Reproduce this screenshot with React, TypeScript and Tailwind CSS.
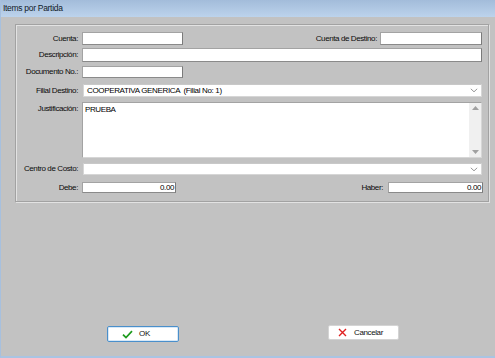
import React from "react";

const font = { fontFamily: '"Liberation Sans", Arial, sans-serif' };

function Box({ w, h, right, text }: { w: string; h: string; right?: boolean; text?: string }) {
  return (
    <div
      className={`${w} ${h} bg-white border border-t-[#a3a3a3] border-l-[#a3a3a3] border-r-[#7a7a7a] border-b-[#8a8a8a] flex items-center ${right ? "justify-end pr-[1px]" : "pl-[2px]"} text-[8px] tracking-[-0.4px] leading-none text-[#000]`}
    >
      {text}
    </div>
  );
}

function Chevron() {
  return (
    <svg width="8" height="5" viewBox="0 0 8 5" className="mr-[3px]">
      <path d="M0.8 0.8 L4 3.8 L7.2 0.8" fill="none" stroke="#8a8a8a" strokeWidth="0.9" />
    </svg>
  );
}

function Select({ h, text }: { h: string; text?: string }) {
  return (
    <div className={`flex-1 ${h} bg-white border border-[#d6d6d6] border-t-[#c8c8c8] flex items-center justify-between pl-[3px] text-[8px] tracking-[-0.35px] leading-none text-[#000]`}>
      <span className="whitespace-pre">{text}</span>
      <Chevron />
    </div>
  );
}

function Label({ children, top }: { children: React.ReactNode; top?: boolean }) {
  return (
    <div
      className={`w-[63px] shrink-0 text-right pr-[1px] text-[8px] tracking-[-0.4px] leading-none text-[#0a0a0a] whitespace-nowrap ${top ? "self-start pt-[3px]" : ""}`}
    >
      {children}
    </div>
  );
}

export default function App() {
  return (
    <div
      className="w-[495px] h-[358px] bg-[#c2c2c2] flex flex-col overflow-hidden border-l border-[#a7c0de] border-b-2 border-b-[#a9c4e2]"
      style={font}
    >
      <div className="h-[17px] shrink-0 bg-gradient-to-b from-[#a3bcda] to-[#bcd3ec] flex items-center pl-[2px] text-[8.5px] tracking-[-0.3px] text-[#111a28]">
        Items por Partida
      </div>

      <div className="ml-[14px] mt-[7px] w-[474px] h-[178px] border border-[#a2a2a2] shadow-[inset_1px_1px_0_#e2e2e2,1px_1px_0_#e2e2e2] flex flex-col pt-[7px] pr-[6px]">
        {/* Cuenta row */}
        <div className="flex items-center h-[13px]">
          <Label>Cuenta:</Label>
          <div className="ml-[3px]">
            <Box w="w-[101px]" h="h-[13px]" />
          </div>
          <div className="flex-1 text-right pr-[3px] text-[8px] tracking-[-0.4px] leading-none text-[#0a0a0a]">
            Cuenta de Destino:
          </div>
          <Box w="w-[102px]" h="h-[13px]" />
        </div>

        {/* Descripción */}
        <div className="flex items-center h-[14px] mt-[3px]">
          <Label>Descripción:</Label>
          <div className="ml-[3px] flex-1">
            <Box w="w-full" h="h-[14px]" />
          </div>
        </div>

        {/* Documento */}
        <div className="flex items-center h-[12px] mt-[4px]">
          <Label>Documento No.:</Label>
          <div className="ml-[3px]">
            <Box w="w-[101px]" h="h-[12px]" />
          </div>
        </div>

        {/* Filial */}
        <div className="flex items-center h-[13px] mt-[6px]">
          <Label>Filial Destino:</Label>
          <div className="ml-[4px] flex-1 flex">
            <Select h="h-[13px]" text="COOPERATIVA GENERICA  (Filial No: 1)" />
          </div>
        </div>

        {/* Justificación */}
        <div className="flex h-[56px] mt-[5px]">
          <Label top>Justificación:</Label>
          <div className="ml-[3px] flex-1 flex bg-white border border-t-[#a3a3a3] border-l-[#a3a3a3] border-r-[#d6d6d6] border-b-[#d6d6d6]">
            <div className="flex-1 pl-[2px] pt-[3px] text-[8px] tracking-[-0.4px] leading-none text-[#000]">
              PRUEBA
            </div>
            <div className="w-[12px] bg-[#f0f0f0] flex flex-col justify-between items-center py-[3px]">
              <svg width="7" height="4" viewBox="0 0 7 4">
                <path d="M0 4 L3.5 0 L7 4 Z" fill="#a0a0a0" />
              </svg>
              <svg width="7" height="4" viewBox="0 0 7 4">
                <path d="M0 0 L3.5 4 L7 0 Z" fill="#a0a0a0" />
              </svg>
            </div>
          </div>
        </div>

        {/* Centro de Costo */}
        <div className="flex items-center h-[12px] mt-[5px]">
          <Label>Centro de Costo:</Label>
          <div className="ml-[4px] flex-1 flex">
            <Select h="h-[12px]" />
          </div>
        </div>

        {/* Debe / Haber */}
        <div className="flex items-center h-[11px] mt-[7px]">
          <Label>Debe:</Label>
          <div className="ml-[3px]">
            <Box w="w-[94px]" h="h-[11px]" right text="0.00" />
          </div>
          <div className="flex-1 text-right pr-[5px] text-[8px] tracking-[-0.4px] leading-none text-[#0a0a0a]">
            Haber:
          </div>
          <div className="-mr-[1px]">
            <Box w="w-[95px]" h="h-[11px]" right text="0.00" />
          </div>
        </div>
      </div>

      {/* Buttons */}
      <div className="flex items-start mt-[124px] ml-[106px]">
        <button className="w-[72px] h-[16px] bg-white border border-[#4a8fcb] rounded-[2px] shadow-[inset_0_0_0_1px_#d7e8f7] flex items-center justify-center gap-[6px] text-[8px] tracking-[-0.4px] leading-none text-[#111]">
          <svg width="11" height="9" viewBox="0 0 11 9">
            <path d="M1 4.6 L4 7.6 L10 1.2" fill="none" stroke="#1e9b1e" strokeWidth="1.7" />
          </svg>
          <span className="mr-[14px]">OK</span>
        </button>
        <button className="ml-[149px] -mt-[1px] w-[71px] h-[15px] bg-white border border-[#d4d4d4] rounded-[2px] flex items-center justify-center gap-[7px] text-[8px] tracking-[-0.4px] leading-none text-[#111]">
          <svg width="9" height="9" viewBox="0 0 9 9">
            <path d="M1 1 L8 8 M8 1 L1 8" fill="none" stroke="#e02020" strokeWidth="1.4" />
          </svg>
          <span className="mr-[6px]">Cancelar</span>
        </button>
      </div>
    </div>
  );
}
